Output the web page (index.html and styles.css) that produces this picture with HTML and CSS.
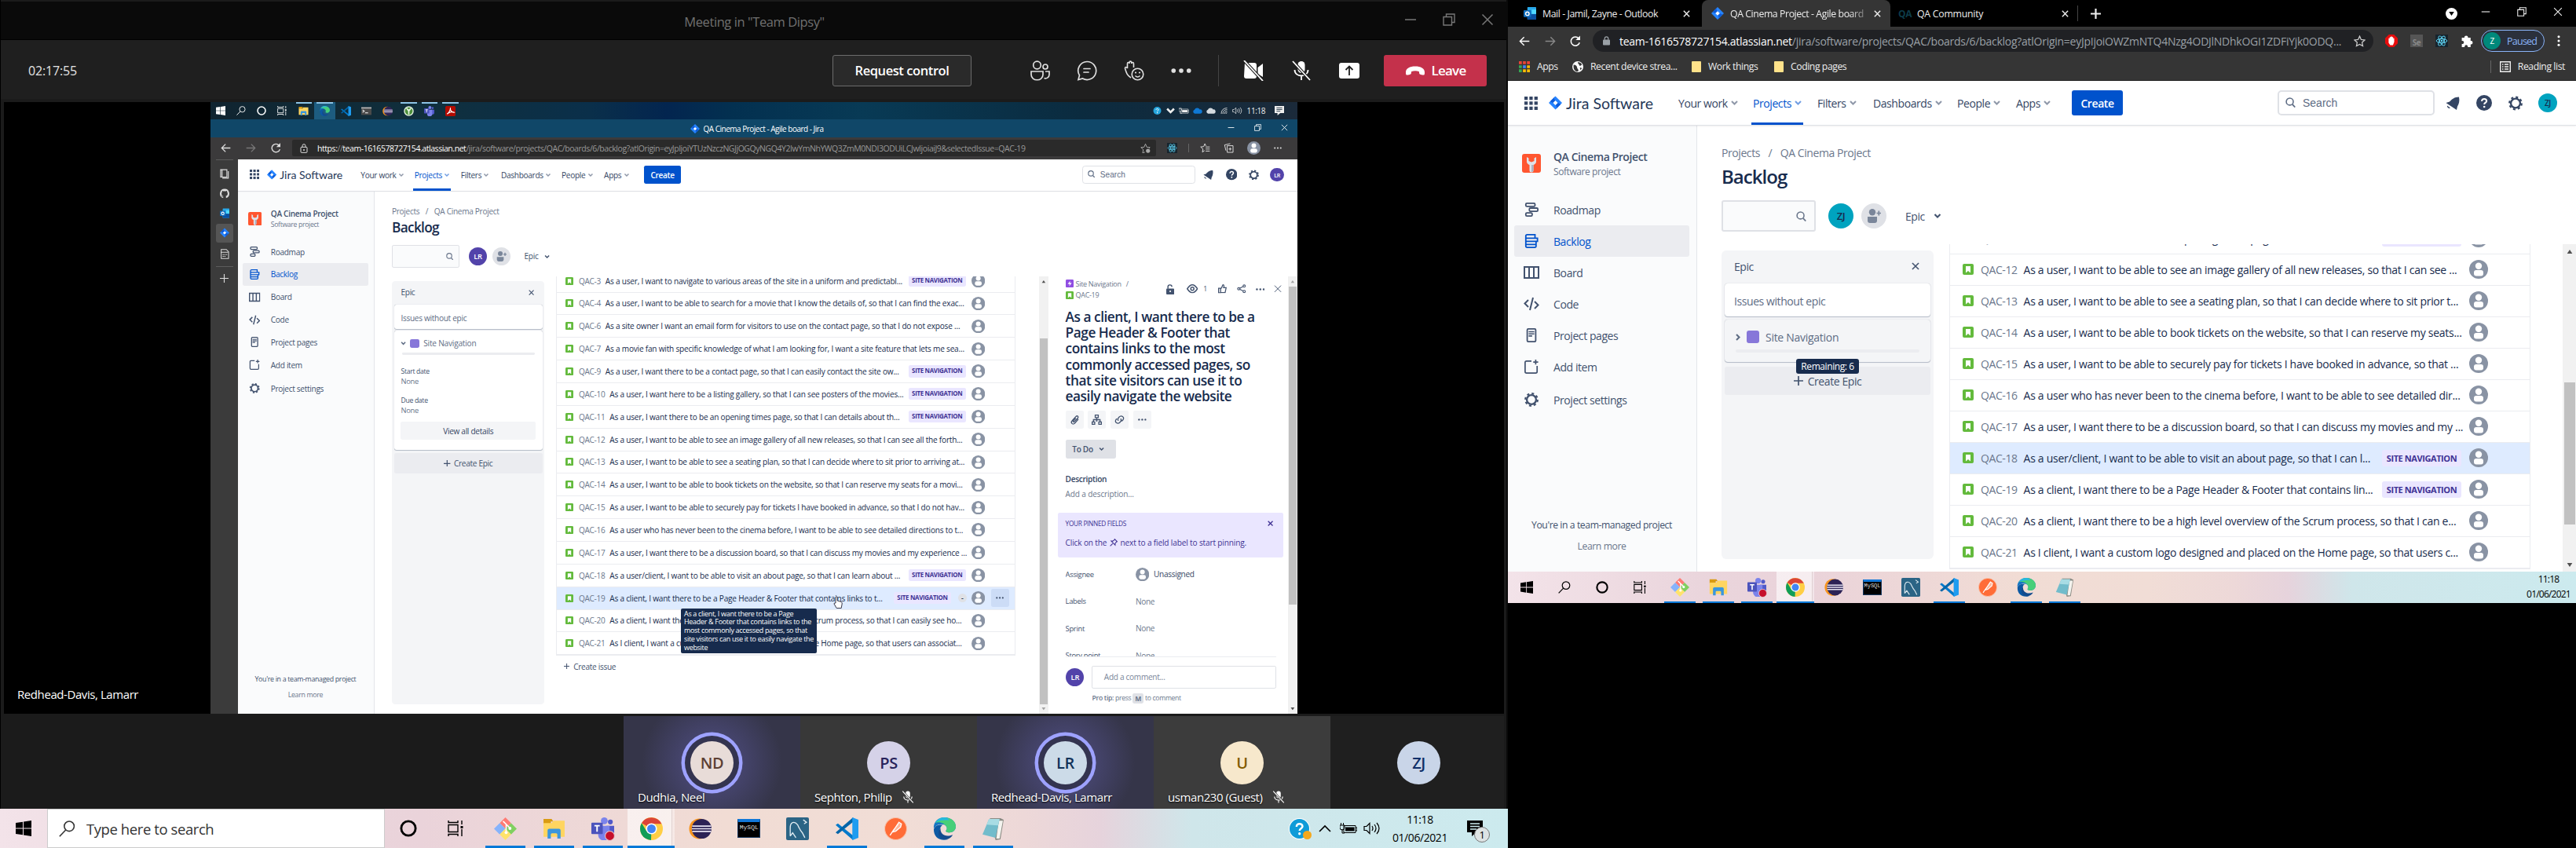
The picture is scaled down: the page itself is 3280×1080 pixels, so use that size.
FILE: index.html
```html
<!DOCTYPE html>
<html lang="en">
<head>
<meta charset="utf-8">
<title>Meeting in "Team Dipsy"</title>
<link rel="stylesheet" href="styles.css">
</head>
<body>
<svg class="defs" aria-hidden="true">
<symbol id="win" viewBox="0 0 20 20"><path fill="currentColor" d="M0 3l9-1.3v7.8H0zM10 1.5L20 0v9.5H10zM0 10.5h9v7.8L0 17zM10 10.5h10V20l-10-1.5z"/></symbol>
<symbol id="search" viewBox="0 0 20 20"><g fill="none" stroke="currentColor" stroke-width="1.5"><circle cx="12.5" cy="7" r="6"/><path d="M8.3 11.5L0.8 19.3"/></g></symbol>
<symbol id="cortana" viewBox="0 0 20 20"><circle cx="10" cy="10" r="8.3" fill="none" stroke="currentColor" stroke-width="2.6"/></symbol>
<symbol id="task" viewBox="0 0 20 20"><g fill="none" stroke="currentColor" stroke-width="1.4"><path d="M1 5.500h12v9H1zM1 0v2.500h12V0M1 20v-2.500h12V20M18 0v5M18 11v9"/></g><path d="M16.500 7h3v3h-3z" fill="currentColor"/></symbol>
<symbol id="git" viewBox="0 0 30 30"><path fill="#ff7b75" d="M15 0l7.500 7.500L15 15 7.500 7.500z"/><path fill="#86b3fb" d="M7.500 7.500L15 15l-7.500 7.500L0 15z"/><path fill="#80d060" d="M22.500 7.500L30 15l-7.500 7.500L15 15z"/><path fill="#ffe36b" d="M15 15l7.500 7.500L15 30l-7.500-7.500z"/><path d="M12 5l9 9M16 9v11" stroke="#fff" stroke-width="1.600" fill="none"/><circle cx="21" cy="14.500" r="2" fill="#fff"/><circle cx="16" cy="20" r="2" fill="#fff"/></symbol>
<symbol id="folder" viewBox="0 0 28 24"><path fill="#d99b12" d="M1 0h10l2 3h-3v3H1z"/><path fill="#ffd560" d="M1 5h10l2-3h14v20H1z"/><path fill="#3a96dd" d="M6 24V14a2 2 0 0 1 2-2h12a2 2 0 0 1 2 2v10h-4v-5a1.500 1.500 0 0 0-1.500-1.500h-5A1.500 1.500 0 0 0 10 19v5z"/></symbol>
<symbol id="teams" viewBox="0 0 30 30"><circle cx="17" cy="4.500" r="4.500" fill="#7b83eb"/><circle cx="25" cy="6" r="3.200" fill="#5059c9"/><path fill="#5059c9" d="M20 11h10v9a5 5 0 0 1-8 4z"/><path fill="#7b83eb" d="M9 11h15v11a7 7 0 0 1-15 2z"/><rect y="7" width="15" height="15" rx="1" fill="#4b53bc"/><path d="M4 11h7M7.500 11v8" stroke="#fff" stroke-width="2"/></symbol>
<symbol id="dot" viewBox="0 0 12 12"><circle cx="6" cy="6" r="5.500" fill="#c50f2b" stroke="#e9c8cc"/></symbol>
<symbol id="chrome" viewBox="0 0 28 28"><circle cx="14" cy="14" r="14" fill="#ffce44"/><path fill="#db4437" d="M14 14L1.900 7A14 14 0 0 1 26.500 8H14z"/><path fill="#0f9d58" d="M14 14l-.5 14A14 14 0 0 1 1.900 7l6 10z"/><circle cx="14" cy="14" r="6.800" fill="#fff"/><circle cx="14" cy="14" r="5.300" fill="#4285f4"/></symbol>
<symbol id="eclipse" viewBox="0 0 30 28"><circle cx="14" cy="14" r="13.500" fill="#f7941e"/><circle cx="17" cy="14" r="13" fill="#2c2255"/><path d="M4.500 10.500h25M4 14h26M4.500 17.500h25" stroke="#e6e3f2" stroke-width="1.800"/></symbol>
<symbol id="wb" viewBox="0 0 28 28"><rect width="28" height="28" rx="2" fill="#2b6485"/><path d="M5 23V13c0-7 5-9 9-4 2 4 3 7 6 10l3 6M5 23l3-4 4 6M21 3l4 3-3 2" fill="none" stroke="#e2edf3" stroke-width="1.300"/></symbol>
<symbol id="code" viewBox="0 0 30 30"><path fill="#0179cb" d="M0 10l3-2 20 16v6z"/><path fill="#0065a9" d="M0 20l3 2L23 6V0z"/><path fill="#1f9cf0" d="M22 0l8 3v24l-8 3z"/></symbol>
<symbol id="post" viewBox="0 0 28 28"><circle cx="14" cy="14" r="13.500" fill="#ff6c37" stroke="#f8c3ac"/><path d="M7 22l4-6 6-8M18 6l3 2-1 4-6 5-4 1z" fill="#ffb89c" stroke="#fff" stroke-width="1.300"/></symbol>
<symbol id="edge" viewBox="0 0 30 30"><path fill="#1475c4" d="M1 15C0 5 8 0 15 0c9 0 15 6 15 12 0 5-4 8-8 8-3 0-5-1-5-2 0-1 2-2 1-5-1-3-4-4-7-4-5 0-9 3-10 6z"/><path fill="#47cf79" d="M3 7C7 1 13 0 17 .300 25 1 30 6 30 12c0 5-4 8-8 8-3 0-5-1-5-2 0-1 2-2 1-5C16 8 9 5 3 7z"/><path fill="#27b9dc" d="M3 7C6 2 10 0 15 0c4 0 6 2 6 4-6-1-13 0-18 3z"/><path fill="#0c59a4" d="M10 13c-4 8 1 17 10 16C9 32 1 26 1 16c1-5 6-7 12-6-1 0-2 1-3 3z"/><path fill="#134b8e" d="M10 14c-1 7 5 13 16 9-3 6-11 8-16 4-4-4-3-9 0-13z"/></symbol>
<symbol id="note" viewBox="0 0 26 28"><path fill="#8b8b84" d="M9 1h13l4 2-4 24-6 1z"/><path fill="#f4f4ef" d="M20 4l5 0-4 22-4 0z"/><path fill="#72bccb" d="M8 2h13l-5 23L0 21z"/><path fill="#a8dce4" d="M8 2h13l-2 8L5 9z"/></symbol>
<symbol id="term" viewBox="0 0 24 18"><path fill="#4a4a4a" d="M0 0h24v18H0z"/><path fill="#bbb" d="M0 0h24v3H0z"/><path d="M3 6l4 3-4 3M9 13h7" stroke="#fff" fill="none" stroke-width="2"/></symbol>
<symbol id="spring" viewBox="0 0 24 24"><circle cx="12" cy="12" r="11.500" fill="#e6f4e1"/><circle cx="12" cy="12" r="9" fill="#4d8f3c"/><path d="M12 20V8M7 5l5 7 5-7" stroke="#e9f7e4" stroke-width="3" fill="none"/></symbol>
<symbol id="acro" viewBox="0 0 24 24"><rect width="24" height="24" rx="3" fill="#b30b00"/><path d="M12 4c-2 6 5 12 9 11-4-3-12 0-17 4 4-3 8-9 8-15z" fill="none" stroke="#fff" stroke-width="2"/></symbol>
<symbol id="help" viewBox="0 0 24 24"><circle cx="12" cy="12" r="12" fill="currentColor"/><path d="M8.500 9.500c0-5 7.300-4.500 7.300-.3 0 2.300-3.600 2.500-3.600 5.300" fill="none" stroke="#fff" stroke-width="2.400"/><circle cx="12.200" cy="18" r="1.600" fill="#fff"/></symbol>
<symbol id="up" viewBox="0 0 16 10"><path d="M1 9l7-7 7 7" fill="none" stroke="currentColor" stroke-width="1.600"/></symbol>
<symbol id="down" viewBox="0 0 10 8"><path d="M1.500 2l3.500 3.500L8.500 2" fill="none" stroke="currentColor" stroke-width="2.100"/></symbol>
<symbol id="batt" viewBox="0 0 22 14"><path d="M5 3.500h15v9H5zM20 6h2v4h-2" fill="none" stroke="currentColor"/><path d="M7 5.500h11.500v5H7z" fill="currentColor"/><path d="M0 3h6v3a3 3 0 0 1-6 0zM1.500 0v3M4.500 0v3M3 8v5h3" fill="none" stroke="currentColor"/></symbol>
<symbol id="vol" viewBox="0 0 22 16"><path d="M1 5.500h3l4-4v13l-4-4H1zM11 5q2 3 0 6M14 3q4 5 0 10M17 1q6 7 0 14" fill="none" stroke="currentColor" stroke-width="1.200"/></symbol>
<symbol id="wifi" viewBox="0 0 20 20"><path d="M3 18Q3 4 18 3M7 18Q7 8 18 7M11 18q0-6 7-7M15 18q0-3 3-3" fill="none" stroke="currentColor" stroke-width="1.600"/></symbol>
<symbol id="cloud" viewBox="0 0 24 16"><path fill="currentColor" d="M6 15a5 5 0 0 1-.5-9.500A7 7 0 0 1 18 5a5 5 0 0 1 1 10z"/></symbol>
<symbol id="notif" viewBox="0 0 20 20"><path fill="currentColor" d="M0 0h20v15h-8l-6 5v-5H0z"/><path d="M4 4h12M4 7.500h12M4 11h8" stroke="var(--cut,#cdebee)" stroke-width="1.400"/></symbol>
<symbol id="people" viewBox="0 0 26 26"><g fill="none" stroke="currentColor" stroke-width="1.700"><circle cx="9.500" cy="6" r="4.800"/><circle cx="20" cy="8" r="3"/><path d="M2 14h15v4c0 9-15 9-15 0zM20 14h5v4c0 4-4 5.500-6.500 4.500"/></g></symbol>
<symbol id="chat" viewBox="0 0 26 26"><path d="M13 1.500A11.500 11.500 0 1 1 7.500 23L2 24.500 3.500 19A11.500 11.500 0 0 1 13 1.500zM9 10.500h8M9 15h6" fill="none" stroke="currentColor" stroke-width="1.700" stroke-linecap="round"/></symbol>
<symbol id="react" viewBox="0 0 26 26"><g fill="none" stroke="currentColor" stroke-width="1.600"><path d="M9 22C4 19 3 15 1.500 10c0-2 2-2 3 0V4c0-2 2.500-2 2.500 0V3c0-2.500 2.800-2.500 2.800 0v1c0-2 2.700-2 2.700 0v5"/><circle cx="17.500" cy="17.500" r="7.300"/><path d="M14.500 19.500q3 3 6 0"/></g><circle cx="15" cy="15.500" r="1.100" fill="currentColor"/><circle cx="20" cy="15.500" r="1.100" fill="currentColor"/></symbol>
<symbol id="dots" viewBox="0 0 24 6"><g fill="currentColor"><circle cx="3" cy="3" r="2.600"/><circle cx="12" cy="3" r="2.600"/><circle cx="21" cy="3" r="2.600"/></g></symbol>
<symbol id="camoff" viewBox="0 0 26 26"><path fill="currentColor" d="M2 3h12a3 3 0 0 1 3 3v14a3 3 0 0 1-3 3H4a3 3 0 0 1-3-3zM18.500 9L25 4v17l-6.500-4z"/><path d="M1 0l24 26" stroke="#1f1f1f" stroke-width="4"/><path d="M1 0l24 26" stroke="currentColor" stroke-width="1.800"/></symbol>
<symbol id="micoff" viewBox="0 0 26 26"><rect x="8.500" y="1" width="9" height="15" rx="4.500" fill="currentColor"/><path d="M4.500 12c0 10 17 10 17 0M13 20v5" fill="none" stroke="currentColor" stroke-width="1.800"/><path d="M2 1l22 24" stroke="var(--cut,#1f1f1f)" stroke-width="4"/><path d="M2 1l22 24" stroke="currentColor" stroke-width="1.800"/></symbol>
<symbol id="present" viewBox="0 0 26 20"><rect width="26" height="20" rx="3" fill="currentColor"/><path d="M13 16V5M8.500 9L13 4.500 17.500 9" stroke="#1f1f1f" stroke-width="1.800" fill="none"/></symbol>
<symbol id="phone" viewBox="0 0 26 12"><path fill="currentColor" d="M1 8C1 3 6 .500 13 .500S25 3 25 8c0 4-.5 4-4 3.200-2.500-.6-3-1-3-4C15 6 11 6 8 7.200c0 3-.5 3.400-3 4C1.500 12 1 12 1 8z"/></symbol>
<symbol id="x" viewBox="0 0 16 16"><path d="M1.500 1.500l13 13M14.500 1.500l-13 13" stroke="currentColor" stroke-width="var(--w,1.500)"/></symbol>
<symbol id="min" viewBox="0 0 16 16"><path d="M1 8h14" stroke="currentColor" stroke-width="1.500"/></symbol>
<symbol id="restore" viewBox="0 0 16 16"><path d="M1 4.500h10.500V15H1zM4.500 4V1H15v10.500h-3" fill="none" stroke="currentColor" stroke-width="1.400"/></symbol>
<symbol id="jira" viewBox="0 0 20 20"><path fill="#2684ff" d="M10 0l10 10-10 10L0 10z"/><path fill="#0e5bd8" d="M10 0q-4 3.500 0 6.500L6.500 10 2 8zM10 20q4-3.500 0-6.500l3.500-3.500L18 12z"/><path fill="#fff" d="M10 6.500l3.500 3.500-3.500 3.500L6.500 10z"/></symbol>
<symbol id="back" viewBox="0 0 20 20"><path d="M19 10H2M9.500 2.500L2 10l7.500 7.500" fill="none" stroke="currentColor" stroke-width="2"/></symbol>
<symbol id="fwd" viewBox="0 0 20 20"><path d="M1 10h17M10.500 2.500L18 10l-7.500 7.500" fill="none" stroke="currentColor" stroke-width="2"/></symbol>
<symbol id="reload" viewBox="0 0 20 20"><path d="M17.500 12.500A8 8 0 1 1 16 5" fill="none" stroke="currentColor" stroke-width="2.200"/><path d="M18.500 0v8h-8z" fill="currentColor"/></symbol>
<symbol id="lock" viewBox="0 0 14 18"><rect y="6.500" width="14" height="11" rx="1.500" fill="currentColor"/><path d="M3.500 7V4.500a3.500 3.500 0 0 1 7 0V7" fill="none" stroke="currentColor" stroke-width="2"/></symbol>
<symbol id="lockline" viewBox="0 0 14 18"><rect x="1" y="6.500" width="12" height="10.500" rx="1.500" fill="none" stroke="currentColor" stroke-width="1.500"/><path d="M4 6.500V4a3 3 0 0 1 6 0v2.500" fill="none" stroke="currentColor" stroke-width="1.500"/><circle cx="7" cy="12" r="1.500" fill="currentColor"/></symbol>
<symbol id="star" viewBox="0 0 20 20"><path d="M10 1.500l2.600 5.700 6.200.7-4.600 4.200 1.200 6.100L10 15.200l-5.400 3 1.200-6.100L1.200 7.900l6.200-.7z" fill="none" stroke="currentColor" stroke-width="1.700"/></symbol>
<symbol id="staradd" viewBox="0 0 20 20"><path d="M9 18l-4.400 2 1.200-7L1.200 8.900l6.200-.7L10 2l2.600 6.200 6.200.7-2 2" fill="none" stroke="currentColor" stroke-width="1.500"/><circle cx="15" cy="15.500" r="4" fill="currentColor"/></symbol>
<symbol id="fav" viewBox="0 0 20 20"><path d="M9 15l-4.400 3 1.200-6L1.200 7.900l6-.7L9.500 1.500l2 4.500M11 8h8M11 12h8M11 16h8" fill="none" stroke="currentColor" stroke-width="1.500"/></symbol>
<symbol id="coll" viewBox="0 0 20 20"><path d="M7 5.500h11.500v13H7zM4.500 15L2 4l11-2.500M12.700 9v6M9.700 12h6" fill="none" stroke="currentColor" stroke-width="1.500"/></symbol>
<symbol id="hand" viewBox="0 0 20 20"><path d="M6 0h8l6 6v8l-6 6H6l-6-6V6z" fill="#e60d0d"/><path d="M5.500 9V6h1.700V4H9V3h2v1h1.700v2h1.700v6l-2 5H8l-2.500-4z" fill="#fff"/></symbol>
<symbol id="atom" viewBox="0 0 20 20"><rect width="20" height="20" fill="#17242d"/><g fill="none" stroke="#61dafb" stroke-width="1.200"><ellipse cx="10" cy="10" rx="8.500" ry="3.300"/><ellipse cx="10" cy="10" rx="8.500" ry="3.300" transform="rotate(60 10 10)"/><ellipse cx="10" cy="10" rx="8.500" ry="3.300" transform="rotate(120 10 10)"/></g><circle cx="10" cy="10" r="1.600" fill="#61dafb"/></symbol>
<symbol id="puzzle" viewBox="0 0 20 20"><path fill="currentColor" d="M2 5h4a3 3 0 1 1 6 0h4v5a2.800 2.800 0 1 1 0 5.500V20h-4.500a2.600 2.600 0 1 0-5 0H2v-5a2.600 2.600 0 1 0 0-5z"/></symbol>
<symbol id="apps9" viewBox="0 0 15 15"><path fill="#ea4335" d="M0 0h4v4H0zM5.500 0h4v4h-4zM11 0h4v4h-4z"/><path fill="#34a853" d="M0 5.500h4v4H0zM0 11h4v4H0z"/><path fill="#4285f4" d="M5.500 5.500h4v4h-4z"/><path fill="#fbbc05" d="M11 5.500h4v4h-4zM5.500 11h4v4h-4zM11 11h4v4h-4z"/></symbol>
<symbol id="globe" viewBox="0 0 16 16"><circle cx="8" cy="8" r="8" fill="#fff"/><path fill="#353535" d="M2 5c3 0 5 2 5 4s2 2 2 5l-2 1C3 14 1 10 2 5zM8 1.500c0 3 2 2 2 4s3 1 4-1C13 2.500 10 1 8 1.500zM11 9l3 1-2 3z"/></symbol>
<symbol id="outlook" viewBox="0 0 20 20"><rect x="6" y="0" width="14" height="20" rx="1" fill="#28a8ea"/><path fill="#0a4fa0" d="M6 11h14v9H6z"/><path fill="#50d9ff" d="M13 4h7v7h-7z"/><rect y="5" width="12" height="11" rx="1" fill="#0f6cbd"/><circle cx="6" cy="10.500" r="2.800" fill="none" stroke="#fff" stroke-width="1.800"/></symbol>
<symbol id="github" viewBox="0 0 20 20"><path fill="currentColor" d="M10 0a10 10 0 0 0-3 19.500v-3c-3 1-4-1-4-1l1-1 2 1.500 1.500-.8C4 15 3.500 12 3.500 10c0-1.500.5-2.500 1.200-3.300V4C6 4 7 5 7.500 5h5c.5 0 1.500-1 2.800-1v2.700c.7.800 1.200 1.800 1.200 3.300 0 2-.5 5-4 5.200.5.800.5 1.300.5 4.300A10 10 0 0 0 10 0z"/></symbol>
<symbol id="grid" viewBox="0 0 18 18"><path fill="currentColor" d="M0 0h4.500v4.500H0zM6.700 0h4.500v4.500H6.700zM13.400 0h4.500v4.500h-4.500zM0 6.700h4.500v4.500H0zM6.700 6.700h4.500v4.500H6.700zM13.400 6.700h4.500v4.500h-4.500zM0 13.400h4.500v4.500H0zM6.700 13.400h4.500v4.500H6.700zM13.400 13.400h4.500v4.500h-4.500z"/></symbol>
<symbol id="mag" viewBox="0 0 14 14"><circle cx="6" cy="5.800" r="4.800" fill="none" stroke="currentColor" stroke-width="1.700"/><path d="M9.500 9.500l3.700 4" stroke="currentColor" stroke-width="1.900"/></symbol>
<symbol id="bell" viewBox="0 0 18 18"><path fill="currentColor" d="M17 1c1 5 0 9-2 12l-1 4.500L.500 8.500 5 7c3-3 6-6 12-6zM2 12l4 3a2.700 2.700 0 0 1-4-3z"/></symbol>
<symbol id="gear" viewBox="0 0 20 20"><circle cx="10" cy="10" r="6.600" fill="none" stroke="currentColor" stroke-width="2.600"/><circle cx="10" cy="10" r="8.700" fill="none" stroke="currentColor" stroke-width="2.400" stroke-dasharray="3.400 3.430"/></symbol>
<symbol id="wrench" viewBox="0 0 24 24"><rect width="24" height="24" rx="3" fill="#ff5630"/><path fill="#dfe3ea" d="M6 4v6c0 2 2 3.500 3.500 4v7a2.500 2.500 0 0 0 5 0v-7c1.500-.5 3.500-2 3.500-4V4l-2.500 1.500V9L12 10.500 8.500 9V5.500z"/><path fill="#aab4c4" d="M12 14h2.500v7a2.500 2.500 0 0 1-2.500 2z"/></symbol>
<symbol id="road" viewBox="0 0 20 20"><g fill="none" stroke="currentColor" stroke-width="2"><rect x="2" y="1" width="13" height="4.500" rx="1.500"/><rect x="7" y="7.800" width="12" height="4.500" rx="1.500"/><rect x="2" y="14.500" width="9" height="4.500" rx="1.500"/></g></symbol>
<symbol id="blog" viewBox="0 0 20 20"><g fill="none" stroke="currentColor" stroke-width="2"><path d="M2 3q0-2 2-2h11v5H2zM2 6h16.500v4.500H2zM2 10.500h14.500v4.300H2zM2 14.800h14.500V17q0 2-2 2H4q-2 0-2-2z"/></g></symbol>
<symbol id="board" viewBox="0 0 20 16"><path d="M1 1h18v14H1zM7 1v14M13 1v14" fill="none" stroke="currentColor" stroke-width="2"/></symbol>
<symbol id="cd" viewBox="0 0 20 16"><path d="M6 3L1.500 7.500 6 12M14 5l4.500 4.500L14 14M12 0L8 16" fill="none" stroke="currentColor" stroke-width="2"/></symbol>
<symbol id="page" viewBox="0 0 14 20"><rect x="1" y="1" width="12" height="18" rx="1.500" fill="none" stroke="currentColor" stroke-width="2"/><path d="M3 5h8M3 8h8M3 11h5" stroke="currentColor" stroke-width="1.800"/></symbol>
<symbol id="book" viewBox="0 0 16 18"><path d="M1 1.500h11v13H1zM3.500 1.500v13M4 16.500h10.500V4" fill="none" stroke="currentColor" stroke-width="1.600"/></symbol>
<symbol id="calc" viewBox="0 0 16 18"><path d="M2 1h9l4 4v12H2zM1 6h13M4.500 10h2M7.500 10h2M10.500 10h2M4.500 13h2M7.500 13h2" fill="none" stroke="currentColor" stroke-width="1.400"/></symbol>
<symbol id="add" viewBox="0 0 20 20"><path d="M10 2H3q-2 0-2 2v13q0 2 2 2h13q2 0 2-2V9M16 0v7M12.500 3.500h7" fill="none" stroke="currentColor" stroke-width="1.900"/></symbol>
<symbol id="addp" viewBox="0 0 18 18"><circle cx="7" cy="4.300" r="4.200" fill="currentColor"/><path fill="currentColor" d="M1 10h12v5q0 3-3 3H4q-3 0-3-3z"/><path d="M15.300 2.500v6M12.500 5.500h5.500" stroke="currentColor" stroke-width="1.700"/></symbol>
<symbol id="story" viewBox="0 0 14 14"><rect width="14" height="14" rx="2" fill="#63ba3c"/><path d="M4 3h6v8.500L7 9l-3 2.500z" fill="#fff"/></symbol>
<symbol id="bolt" viewBox="0 0 14 14"><rect width="14" height="14" rx="2" fill="#904ee2"/><path d="M8 2L3.500 8H7l-1 4 4.500-6H7z" fill="#fff"/></symbol>
<symbol id="user" viewBox="0 0 24 24"><circle cx="12" cy="12" r="12" fill="#8993a4"/><circle cx="12" cy="7.700" r="4.200" fill="#fff"/><rect x="6" y="13" width="12" height="7.500" rx="3" fill="#fff"/></symbol>
<symbol id="unlock" viewBox="0 0 14 18"><rect y="7.500" width="14" height="10.500" rx="1.500" fill="currentColor"/><path d="M3 8V5a3.500 3.500 0 0 1 7-.5" fill="none" stroke="currentColor" stroke-width="2"/><circle cx="7" cy="12.500" r="1.500" fill="#fff"/></symbol>
<symbol id="eye" viewBox="0 0 20 16"><path d="M1 8q9-14 18 0-9 14-18 0z" fill="none" stroke="currentColor" stroke-width="2"/><circle cx="10" cy="8" r="2.800" fill="none" stroke="currentColor" stroke-width="2"/></symbol>
<symbol id="thumb" viewBox="0 0 18 18"><path d="M1 8h4v9H1zM5 9c4-2 3-8 5-8s2 4 1 6h5l-2 9.500H5" fill="none" stroke="currentColor" stroke-width="2"/></symbol>
<symbol id="share" viewBox="0 0 20 20"><path d="M16 4L4 10l12 6" fill="none" stroke="currentColor" stroke-width="2"/><g fill="#fff" stroke="currentColor" stroke-width="2"><circle cx="16" cy="4" r="2.500"/><circle cx="4" cy="10" r="2.500"/><circle cx="16" cy="16" r="2.500"/></g></symbol>
<symbol id="clip" viewBox="0 0 20 20"><path d="M17 9l-7 8c-4 4-9-1-5-5l7-8c3-3 6 0 4 3l-7 7c-1 1-3 0-2-2l5-5" fill="none" stroke="currentColor" stroke-width="2"/></symbol>
<symbol id="tree" viewBox="0 0 20 20"><path d="M7 1h6v5H7zM10 6v8M3.500 14v-4h13v4M1 14.500h5v4.500H1zM14 14.500h5v4.500h-5z" fill="none" stroke="currentColor" stroke-width="2"/></symbol>
<symbol id="link" viewBox="0 0 20 20"><path d="M8 12c-3-3-1-5 1-7 5-5 11 0 8 5l-3 3M12 8c3 3 1 5-1 7-5 5-11 0-8-5l2-2" fill="none" stroke="currentColor" stroke-width="2"/></symbol>
<symbol id="pin" viewBox="0 0 16 16"><path d="M10 1l5 5-2 1-2 3v3L3 5h3l3-2zM6 10l-5 5" fill="none" stroke="currentColor" stroke-width="1.700"/></symbol>
<symbol id="tri" viewBox="0 0 8 6"><path d="M0 6l4-6 4 6z" fill="currentColor"/></symbol>
<symbol id="trid" viewBox="0 0 8 6"><path d="M0 0l4 6 4-6z" fill="currentColor"/></symbol>
<symbol id="plus" viewBox="0 0 12 12"><path d="M6 0v12M0 6h12" stroke="currentColor" stroke-width="var(--w,1.700)"/></symbol>
</svg>

<main class="desk">
<section class="screen1">
  <div class="teams">
    <header class="ttitle"><span class="tt">Meeting in "Team Dipsy"</span><span class="wc"><svg><use href="#min"/></svg><svg><use href="#restore"/></svg><svg><use href="#x"/></svg></span></header>
    <div class="tbar">
      <span class="timer">02:17:55</span><span class="req">Request control</span>
      <div class="tic"><svg><use href="#people"/></svg><svg><use href="#chat"/></svg><svg><use href="#react"/></svg><svg><use href="#dots"/></svg></div>
      <div class="tic b"><svg><use href="#camoff"/></svg><svg><use href="#micoff"/></svg><svg><use href="#present"/></svg></div>
      <span class="leave"><svg><use href="#phone"/></svg>Leave</span>
    </div>
    <div class="stage">
      <div class="speaker">Redhead-Davis, Lamarr</div>
      <div class="share">
        <div class="mtask">
          <div class="ma"><svg><use href="#win"/></svg><svg><use href="#search"/></svg><svg><use href="#cortana"/></svg><svg><use href="#task"/></svg></div>
          <div class="mb"><i class="on"><svg><use href="#folder"/></svg></i><i class="on act"><svg><use href="#edge"/></svg></i><i><svg><use href="#code"/></svg></i><i><svg><use href="#term"/></svg></i><i><svg><use href="#eclipse"/></svg></i><i class="on"><svg><use href="#spring"/></svg></i><i class="on"><svg><use href="#teams"/></svg></i><i class="on"><svg><use href="#acro"/></svg></i></div>
          <div class="mt"><svg class="hb"><use href="#help"/></svg><svg><use href="#down"/></svg><svg><use href="#batt"/></svg><svg class="c1"><use href="#cloud"/></svg><svg class="c2"><use href="#cloud"/></svg><svg><use href="#wifi"/></svg><svg><use href="#vol"/></svg><span>11:18</span><svg class="nt"><use href="#notif"/></svg></div>
        </div>
        <div class="mtitle"><svg><use href="#jira"/></svg><span>QA Cinema Project - Agile board - Jira</span><div class="mwc"><svg><use href="#min"/></svg><svg><use href="#restore"/></svg><svg><use href="#x"/></svg></div></div>
        <div class="maddr"><div class="mnav"><svg><use href="#back"/></svg><svg class="dim"><use href="#fwd"/></svg><svg><use href="#reload"/></svg></div>
          <div class="murl"><svg><use href="#lockline"/></svg><span class="u"><b>https:</b>//<b>team-1616578727154.atlassian.net</b>/jira/software/projects/QAC/boards/6/backlog?atlOrigin=eyJpIjoiYTUzNzczNGJjOGQyNGQ4Y2IwYmNhYWQ3ZmM0NDI3ODUiLCJwIjoiaiJ9&amp;selectedIssue=QAC-19</span><svg class="sa"><use href="#staradd"/></svg></div>
          <div class="mx"><svg><use href="#atom"/></svg><i></i><svg><use href="#fav"/></svg><svg><use href="#coll"/></svg><svg class="pf"><use href="#user"/></svg><svg class="dd"><use href="#dots"/></svg></div></div>
        <div class="mbody">
          <div class="mside"><hr><svg><use href="#book"/></svg><svg><use href="#github"/></svg><svg><use href="#outlook"/></svg><span class="sel"><svg><use href="#jira"/></svg></span><svg><use href="#calc"/></svg><hr><svg class="pl"><use href="#plus"/></svg></div>
          <div class="jira small">
            <header class="jh"><svg class="grid"><use href="#grid"/></svg><svg class="logo"><use href="#jira"/></svg><span class="brand">Jira Software</span>
              <nav><a class="n1">Your work<svg><use href="#down"/></svg></a><a class="n2">Projects<svg><use href="#down"/></svg></a><a class="n3">Filters<svg><use href="#down"/></svg></a><a class="n4">Dashboards<svg><use href="#down"/></svg></a><a class="n5">People<svg><use href="#down"/></svg></a><a class="n6">Apps<svg><use href="#down"/></svg></a></nav>
              <span class="create">Create</span><div class="jsearch"><svg><use href="#mag"/></svg>Search</div>
              <div class="jico"><svg><use href="#bell"/></svg><svg class="q"><use href="#help"/></svg><svg><use href="#gear"/></svg></div><span class="av lr sm">LR</span></header>
            <div class="jbody">
              <aside class="jside"><div class="proj"><svg><use href="#wrench"/></svg><div><b>QA Cinema Project</b><small>Software project</small></div></div>
                <ul><li><svg><use href="#road"/></svg>Roadmap</li><li class="cur"><svg><use href="#blog"/></svg>Backlog</li><li><svg><use href="#board"/></svg>Board</li><li><svg><use href="#cd"/></svg>Code</li><li><svg><use href="#page"/></svg>Project pages</li><li><svg><use href="#add"/></svg>Add item</li><li class="last"><svg><use href="#gear"/></svg>Project settings</li></ul>
                <div class="foot"><span>You're in a team-managed project</span><a>Learn more</a></div></aside>
              <div class="jmain">
                <div class="crumbs"><span>Projects</span><span>/</span><span>QA Cinema Project</span></div><h1>Backlog</h1>
                <div class="filters"><div class="fbox"><svg><use href="#mag"/></svg></div><span class="av lr">LR</span><span class="av ap"><svg><use href="#addp"/></svg></span><span class="ef">Epic<svg><use href="#down"/></svg></span></div>
                <div class="work">
                  <div class="epic"><div class="eh">Epic<svg><use href="#x"/></svg></div><div class="card c0">Issues without epic</div>
                    <div class="card sn open"><div class="snt"><svg><use href="#down"/></svg><i></i>Site Navigation</div><div class="bar"></div><dl><dt>Start date</dt><dd>None</dd><dt>Due date</dt><dd>None</dd></dl><div class="vad">View all details</div></div>
                    <div class="ce"><svg><use href="#plus"/></svg>Create Epic</div></div>
                  <div class="listwrap"><div class="list">
                    <div class="row"><svg><use href="#story"/></svg><em>QAC-3</em><p>As a user, I want to navigate to various areas of the site in a uniform and predictabl...</p><b>SITE NAVIGATION</b><svg class="us"><use href="#user"/></svg></div>
                    <div class="row"><svg><use href="#story"/></svg><em>QAC-4</em><p>As a user, I want to be able to search for a movie that I know the details of, so that I can find the exac...</p><svg class="us"><use href="#user"/></svg></div>
                    <div class="row"><svg><use href="#story"/></svg><em>QAC-6</em><p>As a site owner I want an email form for visitors to use on the contact page, so that I do not expose ...</p><svg class="us"><use href="#user"/></svg></div>
                    <div class="row"><svg><use href="#story"/></svg><em>QAC-7</em><p>As a movie fan with specific knowledge of what I am looking for, I want a site feature that lets me sea...</p><svg class="us"><use href="#user"/></svg></div>
                    <div class="row"><svg><use href="#story"/></svg><em>QAC-9</em><p>As a user, I want there to be a contact page, so that I can easily contact the site ow...</p><b>SITE NAVIGATION</b><svg class="us"><use href="#user"/></svg></div>
                    <div class="row"><svg><use href="#story"/></svg><em>QAC-10</em><p>As a user, I want here to be a listing gallery, so that I can see posters of the movies...</p><b>SITE NAVIGATION</b><svg class="us"><use href="#user"/></svg></div>
                    <div class="row"><svg><use href="#story"/></svg><em>QAC-11</em><p>As a user, I want there to be an opening times page, so that I can details about th...</p><b>SITE NAVIGATION</b><svg class="us"><use href="#user"/></svg></div>
                    <div class="row"><svg><use href="#story"/></svg><em>QAC-12</em><p>As a user, I want to be able to see an image gallery of all new releases, so that I can see all the forth...</p><svg class="us"><use href="#user"/></svg></div>
                    <div class="row"><svg><use href="#story"/></svg><em>QAC-13</em><p>As a user, I want to be able to see a seating plan, so that I can decide where to sit prior to arriving at...</p><svg class="us"><use href="#user"/></svg></div>
                    <div class="row"><svg><use href="#story"/></svg><em>QAC-14</em><p>As a user, I want to be able to book tickets on the website, so that I can reserve my seats for a movi...</p><svg class="us"><use href="#user"/></svg></div>
                    <div class="row"><svg><use href="#story"/></svg><em>QAC-15</em><p>As a user, I want to be able to securely pay for tickets I have booked in advance, so that I do not hav...</p><svg class="us"><use href="#user"/></svg></div>
                    <div class="row"><svg><use href="#story"/></svg><em>QAC-16</em><p>As a user who has never been to the cinema before, I want to be able to see detailed directions to t...</p><svg class="us"><use href="#user"/></svg></div>
                    <div class="row"><svg><use href="#story"/></svg><em>QAC-17</em><p>As a user, I want there to be a discussion board, so that I can discuss my movies and my experience ...</p><svg class="us"><use href="#user"/></svg></div>
                    <div class="row"><svg><use href="#story"/></svg><em>QAC-18</em><p>As a user/client, I want to be able to visit an about page, so that I can learn about ...</p><b>SITE NAVIGATION</b><svg class="us"><use href="#user"/></svg></div>
                    <div class="row hot"><svg><use href="#story"/></svg><em>QAC-19</em><p>As a client, I want there to be a Page Header &amp; Footer that contains links to t...</p><b>SITE NAVIGATION</b><i class="est">-</i><svg class="us"><use href="#user"/></svg><i class="more"><svg><use href="#dots"/></svg></i></div>
                    <div class="row"><svg><use href="#story"/></svg><em>QAC-20</em><p>As a client, I want there to be a high level overview of the Scrum process, so that I can easily see ho...</p><svg class="us"><use href="#user"/></svg></div>
                    <div class="row"><svg><use href="#story"/></svg><em>QAC-21</em><p>As I client, I want a custom logo designed and placed on the Home page, so that users can associat...</p><svg class="us"><use href="#user"/></svg></div>
                  </div><div class="ci"><svg><use href="#plus"/></svg>Create issue</div></div>
                  <div class="sb"><svg><use href="#tri"/></svg><i></i><svg class="g"><use href="#trid"/></svg></div>
                  <div class="detail">
                    <div class="dh"><div class="dc"><span><svg><use href="#bolt"/></svg>Site Navigation&nbsp;&nbsp; /</span><span><svg><use href="#story"/></svg>QAC-19</span></div><div class="da"><svg class="a1"><use href="#unlock"/></svg><svg class="a2"><use href="#eye"/></svg><span>1</span><svg class="a3"><use href="#thumb"/></svg><svg class="a4"><use href="#share"/></svg><svg class="a5"><use href="#dots"/></svg><svg class="a6"><use href="#x"/></svg></div></div>
                    <h2>As a client, I want there to be a<br>Page Header &amp; Footer that<br>contains links to the most<br>commonly accessed pages, so<br>that site visitors can use it to<br>easily navigate the website</h2>
                    <div class="dbt"><i><svg><use href="#clip"/></svg></i><i><svg><use href="#tree"/></svg></i><i><svg><use href="#link"/></svg></i><i><svg class="dd"><use href="#dots"/></svg></i></div>
                    <div class="todo">To Do<svg><use href="#down"/></svg></div>
                    <h3>Description</h3><p class="ad">Add a description...</p>
                    <div class="pinned"><div>YOUR PINNED FIELDS<svg><use href="#x"/></svg></div><p>Click on the <svg><use href="#pin"/></svg> next to a field label to start pinning.</p></div>
                    <div class="fields"><div><b>Assignee</b><span class="un"><svg><use href="#user"/></svg>Unassigned</span></div><div><b>Labels</b><span>None</span></div><div><b>Sprint</b><span>None</span></div><div><b>Story point</b><span>None</span></div></div>
                    <div class="comment"><span class="av lr">LR</span><div class="cbox">Add a comment...</div></div>
                    <div class="tip"><b>Pro tip:</b> press <kbd>M</kbd> to comment</div>
                  </div>
                  <div class="sb two"><svg class="g"><use href="#tri"/></svg><i></i><svg><use href="#trid"/></svg></div>
                </div>
              </div>
            </div>
          </div>
        </div>
        <div class="tooltip">As a client, I want there to be a Page<br>Header &amp; Footer that contains links to the<br>most commonly accessed pages, so that<br>site visitors can use it to easily navigate the<br>website</div>
        <svg class="cursor" viewBox="0 0 12 16"><path d="M3 9V1.500q1.200-1.500 2.200 0V6l5 1.500q1.300.5 1 2.500l-1 5.500h-6L1 10q0-1.500 2-1z" fill="#fff" stroke="#223" stroke-width=".9"/></svg>
      </div>
    </div>
    <div class="tiles">
      <div class="tile talk"><span class="pa nd">ND</span><label>Dudhia, Neel</label></div>
      <div class="tile"><span class="pa ps">PS</span><label>Sephton, Philip<svg><use href="#micoff"/></svg></label></div>
      <div class="tile talk"><span class="pa rl">LR</span><label>Redhead-Davis, Lamarr</label></div>
      <div class="tile lite"><span class="pa uu">U</span><label>usman230 (Guest)<svg><use href="#micoff"/></svg></label></div>
      <div class="tile me"><span class="pa zj">ZJ</span></div>
    </div>
  </div>
  <footer class="task big">
    <div class="ta"><svg><use href="#win"/></svg></div><div class="tsearch"><svg><use href="#search"/></svg>Type here to search</div><div class="ta"><svg class="co"><use href="#cortana"/></svg></div><div class="ta"><svg><use href="#task"/></svg></div>
    <div class="tb"><i class="on"><svg><use href="#git"/></svg></i><i class="on"><svg><use href="#folder"/></svg></i><i class="on"><svg><use href="#teams"/></svg><svg class="rec"><use href="#dot"/></svg></i><i class="on act"><svg><use href="#chrome"/></svg></i><i><svg><use href="#eclipse"/></svg></i><i><span class="my">MySQL</span></i><i><svg><use href="#wb"/></svg></i><i class="on"><svg><use href="#code"/></svg></i><i><svg><use href="#post"/></svg></i><i class="on"><svg><use href="#edge"/></svg></i><i class="on"><svg><use href="#note"/></svg></i></div>
    <div class="tray"><div class="hq"><svg><use href="#help"/></svg><b></b></div><svg class="up"><use href="#up"/></svg><svg class="bt"><use href="#batt"/></svg><svg class="vo"><use href="#vol"/></svg><div class="clock"><span>11:18</span><span>01/06/2021</span></div><div class="nb"><svg><use href="#notif"/></svg><b>1</b></div></div>
  </footer>
</section>

<section class="screen2">
  <div class="tabs"><div class="tab t1"><svg><use href="#outlook"/></svg><span>Mail - Jamil, Zayne - Outlook</span><svg class="x"><use href="#x"/></svg></div><div class="tab t2"><svg><use href="#jira"/></svg><span>QA Cinema Project - Agile board</span><svg class="x"><use href="#x"/></svg></div><div class="tab t3"><strong>QA</strong><span>QA Community</span><svg class="x"><use href="#x"/></svg></div><svg class="np"><use href="#plus"/></svg>
    <div class="cwc"><i><svg><use href="#trid"/></svg></i><svg><use href="#min"/></svg><svg><use href="#restore"/></svg><svg><use href="#x"/></svg></div></div>
  <div class="ctool"><div class="cnav"><svg><use href="#back"/></svg><svg class="dim"><use href="#fwd"/></svg><svg><use href="#reload"/></svg></div>
    <div class="curl"><svg><use href="#lock"/></svg><span><b>team-1616578727154.atlassian.net</b>/jira/software/projects/QAC/boards/6/backlog?atlOrigin=eyJpIjoiOWZmNTQ4Nzg4ODJlNDhkOGI1ZDFiYjk0ODQ...</span><svg class="st"><use href="#star"/></svg></div>
    <div class="cext"><svg class="h"><use href="#hand"/></svg><i class="se">Se</i><svg><use href="#atom"/></svg><svg class="pz"><use href="#puzzle"/></svg></div><div class="paused"><i>Z</i>Paused</div><svg class="kebab"><use href="#dots"/></svg></div>
  <div class="marks"><span class="m1"><svg><use href="#apps9"/></svg>Apps</span><span class="m2"><svg><use href="#globe"/></svg>Recent device strea...</span><span class="m3"><i></i>Work things</span><span class="m4"><i></i>Coding pages</span><span class="m5"><svg viewBox="0 0 14 14"><path d="M.7.7h12.600v12.600H.700zM3 4h1.500M6 4h5M3 7h1.500M6 7h5M3 10h1.500M6 10h5" fill="none" stroke="#eee" stroke-width="1.400"/></svg>Reading list</span></div>
  <div class="jira">
    <header class="jh"><svg class="grid"><use href="#grid"/></svg><svg class="logo"><use href="#jira"/></svg><span class="brand">Jira Software</span>
      <nav><a class="n1">Your work<svg><use href="#down"/></svg></a><a class="n2">Projects<svg><use href="#down"/></svg></a><a class="n3">Filters<svg><use href="#down"/></svg></a><a class="n4">Dashboards<svg><use href="#down"/></svg></a><a class="n5">People<svg><use href="#down"/></svg></a><a class="n6">Apps<svg><use href="#down"/></svg></a></nav>
      <span class="create">Create</span><div class="jsearch"><svg><use href="#mag"/></svg>Search</div>
      <div class="jico"><svg><use href="#bell"/></svg><svg class="q"><use href="#help"/></svg><svg><use href="#gear"/></svg></div><span class="av teal sm">ZJ</span></header>
    <div class="jbody">
      <aside class="jside"><div class="proj"><svg><use href="#wrench"/></svg><div><b>QA Cinema Project</b><small>Software project</small></div></div>
        <ul><li><svg><use href="#road"/></svg>Roadmap</li><li class="cur"><svg><use href="#blog"/></svg>Backlog</li><li><svg><use href="#board"/></svg>Board</li><li><svg><use href="#cd"/></svg>Code</li><li><svg><use href="#page"/></svg>Project pages</li><li><svg><use href="#add"/></svg>Add item</li><li class="last"><svg><use href="#gear"/></svg>Project settings</li></ul>
        <div class="foot"><span>You're in a team-managed project</span><a>Learn more</a></div></aside>
      <div class="jmain">
        <div class="crumbs"><span>Projects</span><span>/</span><span>QA Cinema Project</span></div><h1>Backlog</h1>
        <div class="filters"><div class="fbox"><svg><use href="#mag"/></svg></div><span class="av teal">ZJ</span><span class="av ap"><svg><use href="#addp"/></svg></span><span class="ef">Epic<svg><use href="#down"/></svg></span></div>
        <div class="work">
          <div class="epic"><div class="eh">Epic<svg><use href="#x"/></svg></div><div class="card c0">Issues without epic</div>
            <div class="card sn"><div class="snt"><svg class="rt"><use href="#down"/></svg><i></i>Site Navigation</div><div class="bar"></div><div class="remain">Remaining: 6</div></div>
            <div class="ce"><svg><use href="#plus"/></svg>Create Epic</div></div>
          <div class="listwrap"><div class="list">
            <div class="row"><svg><use href="#story"/></svg><em>QAC-11</em><p>As a user, I want there to be an opening times page, so that I can d...</p><b>SITE NAVIGATION</b><svg class="us"><use href="#user"/></svg></div>
            <div class="row"><svg><use href="#story"/></svg><em>QAC-12</em><p>As a user, I want to be able to see an image gallery of all new releases, so that I can see ...</p><svg class="us"><use href="#user"/></svg></div>
            <div class="row"><svg><use href="#story"/></svg><em>QAC-13</em><p>As a user, I want to be able to see a seating plan, so that I can decide where to sit prior t...</p><svg class="us"><use href="#user"/></svg></div>
            <div class="row"><svg><use href="#story"/></svg><em>QAC-14</em><p>As a user, I want to be able to book tickets on the website, so that I can reserve my seats...</p><svg class="us"><use href="#user"/></svg></div>
            <div class="row"><svg><use href="#story"/></svg><em>QAC-15</em><p>As a user, I want to be able to securely pay for tickets I have booked in advance, so that ...</p><svg class="us"><use href="#user"/></svg></div>
            <div class="row"><svg><use href="#story"/></svg><em>QAC-16</em><p>As a user who has never been to the cinema before, I want to be able to see detailed dir...</p><svg class="us"><use href="#user"/></svg></div>
            <div class="row"><svg><use href="#story"/></svg><em>QAC-17</em><p>As a user, I want there to be a discussion board, so that I can discuss my movies and my ...</p><svg class="us"><use href="#user"/></svg></div>
            <div class="row hot"><svg><use href="#story"/></svg><em>QAC-18</em><p>As a user/client, I want to be able to visit an about page, so that I can l...</p><b>SITE NAVIGATION</b><svg class="us"><use href="#user"/></svg></div>
            <div class="row"><svg><use href="#story"/></svg><em>QAC-19</em><p>As a client, I want there to be a Page Header &amp; Footer that contains lin...</p><b>SITE NAVIGATION</b><svg class="us"><use href="#user"/></svg></div>
            <div class="row"><svg><use href="#story"/></svg><em>QAC-20</em><p>As a client, I want there to be a high level overview of the Scrum process, so that I can e...</p><svg class="us"><use href="#user"/></svg></div>
            <div class="row"><svg><use href="#story"/></svg><em>QAC-21</em><p>As I client, I want a custom logo designed and placed on the Home page, so that users c...</p><svg class="us"><use href="#user"/></svg></div>
          </div></div>
          <div class="sb"><svg><use href="#tri"/></svg><i></i><svg><use href="#trid"/></svg></div>
        </div>
      </div>
    </div>
  </div>
  <footer class="task mini">
    <div class="ta"><svg><use href="#win"/></svg></div><div class="ta"><svg><use href="#search"/></svg></div><div class="ta"><svg class="co"><use href="#cortana"/></svg></div><div class="ta"><svg><use href="#task"/></svg></div>
    <div class="tb"><i class="on"><svg><use href="#git"/></svg></i><i class="on"><svg><use href="#folder"/></svg></i><i class="on"><svg><use href="#teams"/></svg><svg class="rec"><use href="#dot"/></svg></i><i class="on act"><svg><use href="#chrome"/></svg></i><i><svg><use href="#eclipse"/></svg></i><i><span class="my">MySQL</span></i><i><svg><use href="#wb"/></svg></i><i class="on"><svg><use href="#code"/></svg></i><i><svg><use href="#post"/></svg></i><i class="on"><svg><use href="#edge"/></svg></i><i class="on"><svg><use href="#note"/></svg></i></div>
    <div class="clock"><span>11:18</span><span>01/06/2021</span></div>
  </footer>
</section>
</main>
</body>
</html>
```
FILE: styles.css
```css
* { box-sizing: border-box; }
body { margin: 0; background: #000; width: 3280px; height: 1080px; overflow: hidden; font-family: "Open Sans", "Noto Sans", sans-serif; font-size: 14px; letter-spacing: -0.03em; white-space: nowrap; }
.defs { position: absolute; width: 0; height: 0; }
svg { flex: none; display: block; }
i, em { font-style: normal; }
p, h1, h2, h3, ul, dl, dd { margin: 0; padding: 0; }
.desk { display: flex; height: 1080px; }
.screen1 { width: 1920px; display: flex; flex-direction: column; background: #0a0a0a; }
.screen2 { width: 1360px; display: flex; flex-direction: column; background: #000; }

/* Meeting window */
.teams { height: 1030px; width: 1918px; padding-top: 2px; border-left: 1px solid #000; background: #1b1b1b; display: flex; flex-direction: column; }
.ttitle { height: 49px; background: #0a0a0a; border-bottom: 1px solid #000; display: flex; align-items: center; justify-content: flex-end; position: relative; color: #707070; }
.tt { flex: 1; text-align: center; font-size: 16.5px; padding: 3px 0 0 150px; }
.wc { display: flex; justify-content: flex-end; gap: 33px; padding: 0 16px 2px 0; width: 148px; color: #777; }
.wc svg { width: 16px; height: 16px; }
.tbar { height: 75px; background: #1f1f1f; display: flex; align-items: center; padding: 2px 25px 0 35px; color: #fff; }
.timer { flex: 1; font-size: 16px; color: #e4e4e4; letter-spacing: -0.01em; }
.req { width: 177px; height: 40px; border: 1px solid #6c6c6c; background: #2a2a2a; border-radius: 3px; display: flex; align-items: center; justify-content: center; font-weight: 600; font-size: 16.5px; margin-right: 74px; }
.tic { display: flex; align-items: center; gap: 34px; color: #e0e0e0; width: 240px; }
.tic svg { width: 26px; height: 26px; }
.tic.b { border-left: 1px solid #444; height: 40px; padding-left: 31px; gap: 35px; width: 211px; color: #fff; }
.leave { width: 131px; height: 40px; border-radius: 3px; background: #c4314b; display: flex; align-items: center; justify-content: center; gap: 8px; font-weight: 600; font-size: 17px; letter-spacing: -0.045em; }
.leave svg { width: 26px; height: 12px; }
.stage { height: 779px; margin: 4px 3px 0 4px; background: #000; display: flex; color: #fff; }
.speaker { width: 263px; align-self: flex-end; padding: 0 0 15px 17px; font-size: 15px; line-height: 20px; }
.share { width: 1384px; height: 779px; position: relative; display: flex; flex-direction: column; overflow: hidden; }
.mtask { height: 22px; background: linear-gradient(90deg,#102430,#102f3d 20%,#0a2f4a 35%,#03254f 42%,#033050 48%,#083a55 60%,#0b2b3f 80%,#1b2a3a); display: flex; }
.ma { display: flex; width: 105.5px; }
.ma svg { width: 26px; height: 22px; padding: 5px 7px; }
.mb { display: flex; flex: 1; }
.mb i { width: 26.7px; display: flex; justify-content: center; align-items: center; position: relative; }
.mb svg { width: 13px; height: 13px; }
.mb .act { background: #1d5c80; }
.mb .on::after { content: ""; position: absolute; left: 3px; right: 3px; top: 0; height: 1.5px; background: #8cc4e6; }
.mt { display: flex; align-items: center; gap: 4px; padding-right: 16px; font-size: 10px; color: #eee; --cut: #182b3a; }
.mt svg { width: 13px; height: 10px; }
.mt .hb { color: #25a5dd; } .mt .c1 { color: #0f78d4; } .mt .c2 { color: #d5dbe0; }
.mt span { margin: 0 5px 0 2px; }
.mt svg.nt { width: 14px; height: 12px; margin-left: 2px; }
.mtitle { height: 23px; background: #104768; display: flex; align-items: center; justify-content: center; gap: 5px; font-size: 10px; letter-spacing: -.05em; position: relative; padding-left: 7px; }
.mtitle > svg { width: 12px; height: 12px; }
.mwc { position: absolute; right: 12px; top: 6px; display: flex; gap: 25px; }
.mwc svg { width: 9px; height: 9px; }
.maddr { height: 27.5px; background: #3b3a3b; display: flex; align-items: center; }
.mnav { display: flex; width: 104px; padding-left: 13px; gap: 19px; color: #ddd; }
.mnav svg { width: 13px; height: 13px; } .mnav .dim { color: #777; }
.murl { width: 500px; flex: 1; height: 21px; background: #2a2a2a; border-radius: 2px; display: flex; align-items: center; padding: 0 7px 0 10px; color: #999; font-size: 10.5px; gap: 12px; }
.murl svg { width: 10px; height: 12px; color: #ddd; }
.murl .u { flex: 1; letter-spacing: -.042em; } .murl b { font-weight: 400; color: #fff; }
.murl svg.sa { width: 13px; height: 13px; color: #aaa; }
.mx { width: 180px; display: flex; align-items: center; padding-left: 14px; gap: 17px; color: #ddd; }
.mx svg { width: 13px; height: 13px; } .mx i { width: 1px; height: 11px; background: #666; margin: 0 -3px; }
.mx svg.pf { width: 17px; height: 17px; } .mx svg.dd { width: 10px; height: 3px; }
.mbody { display: flex; height: 706.5px; }
.mside { width: 35px; background: #3b3b3b; display: flex; flex-direction: column; align-items: center; color: #ddd; }
.mside hr { width: 22px; margin: 0; border: 0; border-top: 1px solid #5c5c5c; }
.mside svg { width: 12px; height: 13px; margin-top: 12.500px; } .mside hr + svg { margin-top: 11px; }
.mside .sel { width: 22px; height: 24px; border-radius: 3px; background: #555; margin: 7px 0 -4px; display: flex; justify-content: center; align-items: center; }
.mside .sel svg { margin: 0; } .mside svg + hr { margin-top: 9px; } .mside svg:nth-child(3), .mside svg:nth-child(4) { margin-top: 12px; } .mside svg.pl { width: 11px; height: 11px; margin-top: 9px; --w: 1.200; }
.tooltip { position: absolute; left: 599px; top: 645px; width: 173px; height: 57px; background: #172b4d; color: #fff; border-radius: 2px; padding: 1.500px 4px; font-size: 9px; line-height: 10.9px; letter-spacing: -.035em; }
.cursor { position: absolute; left: 793px; top: 629px; width: 12px; height: 16px; }

/* Participants */
.tiles { display: flex; margin-top: 3px; height: 118px; padding-left: 793px; }
.tile { width: 225px; background: #383838; --cut: #383838; display: flex; flex-direction: column; align-items: center; position: relative; color: #fff; }
.tile.talk { background: radial-gradient(circle at 50% 50%, #56548a 0, #45446c 30%, #353549 70%); }
.tile.lite { background: #3c3c3c; --cut: #3c3c3c; } .tile.me { width: 221px; background: #1f1f1f; padding-left: 4px; }
.pa { width: 55px; height: 55px; border-radius: 50%; margin-top: 32px; display: flex; align-items: center; justify-content: center; font-size: 20px; font-weight: 600; letter-spacing: -0.02em; }
.talk .pa { box-shadow: 0 0 0 7px #343450, 0 0 0 11.500px #9ea2ff; }
.nd { background: #e8dcd8; color: #5c4034; } .ps { background: #d5d2e8; color: #28235a; } .rl { background: #ccdbe8; color: #123258; } .uu { background: #f7e8cc; color: #835b00; } .zj { background: #c9d5e8; color: #0f2f68; }
.tile label { width: 100%; margin-top: 5px; padding-left: 18px; font-size: 15px; line-height: 22px; display: flex; align-items: center; gap: 12px; text-shadow: 0 1px 2px #000; position: relative; }
.tile label svg { width: 16px; height: 16px; }

/* Windows taskbars */
.task { display: flex; align-items: stretch; color: #000; background: linear-gradient(90deg,#f3e3e9,#ead5dc 18%,#ead3da 28%,#f1dcd4 48%,#f1ddd6 60%,#edd8d8 68%,#e6d3dc 73%,#cfe6ea 79%,#cceaee); }
.ta { display: flex; justify-content: center; align-items: center; width: 60px; }
.ta svg { width: 20px; height: 20px; }
.tsearch { width: 430px; background: #fff; border: 1px solid #ccc; display: flex; align-items: center; padding-left: 14px; gap: 14px; font-size: 18.5px; color: #333; }
.tsearch svg { width: 21px; height: 21px; }
.tb { display: flex; }
.tb i { display: flex; align-items: center; justify-content: center; position: relative; width: 62.150px; }
.tb svg { width: 29px; height: 29px; }
.tb .rec { position: absolute; width: 13px; height: 13px; left: 34px; top: 28px; }
.tb .on::after { content: ""; position: absolute; bottom: 0; left: 6px; width: 51px; height: 3px; background: #0078d7; }
.tb .act { background: linear-gradient(90deg, transparent 1px, #fff9 1px, #fff9 57px, #cbb 57px, #fff6 58px, #fff6 61px, transparent 61px); }
.tb .act::after { left: 1px; width: 60px; }
.my { width: 29px; height: 24px; background: #000; border: 1px solid #16385f; border-top: 4px solid #1177d8; color: #ddd; font: 8px/13px "Liberation Mono", monospace; text-align: center; letter-spacing: 0; }
.mini .my { width: 24px; height: 20px; font-size: 7px; line-height: 10px; border-top-width: 3px; }
.big { height: 50px; } .big .tb { margin-left: 2px; flex: 1; }
.big .co, .mini .co { width: 22px; height: 22px; }
.tray { display: flex; align-items: center; }
.hq { color: #0f9bd8; width: 25px; height: 25px; margin-right: 12px; position: relative; border-radius: 50%; box-shadow: 0 0 0 1px #fff; } .hq svg { width: 25px; height: 25px; } .hq b { position: absolute; right: -3px; bottom: -1px; width: 11px; height: 11px; border-radius: 50%; background: #f5a81c; }
.tray .up { width: 16px; height: 10px; margin-right: 11px; } .tray .bt { width: 22px; height: 14px; margin-right: 8px; } .tray .vo { width: 22px; height: 16px; margin-right: 10px; }
.clock { display: flex; flex-direction: column; align-items: center; justify-content: center; font-size: 14px; line-height: 23px; width: 80px; }
.nb { width: 72px; padding-left: 20px; position: relative; } .nb > svg { width: 20px; height: 20px; }
.nb b { position: absolute; left: 29px; top: 8px; width: 20px; height: 20px; border-radius: 50%; border: 1px solid #777; background: #dde3e4; font-weight: 400; font-size: 13px; text-align: center; line-height: 18px; }
.mini { height: 40px; } .mini .ta { width: 48px; } .mini .ta svg { width: 16px; height: 16px; } .mini .tb { margin-left: 2.500px; flex: 1; } .mini .tb i { width: 49px; }
.mini .tb svg { width: 24px; height: 24px; } .mini .tb svg.rec { width: 11px; height: 11px; left: 26px; top: 22px; }
.mini .tb .on::after { left: 4px; width: 40px; height: 2px; } .mini .tb .act::after { left: 0; width: 48px; }
.mini .tb .act { background: linear-gradient(90deg,#fff9 45px,#cbb 45px,#fff6 46px,#fff6 48px,transparent 48px); }
.mini .clock { font-size: 12px; line-height: 18.500px; width: 70px; padding-bottom: 1px; letter-spacing: -.065em; }

/* Chrome */
.tabs { height: 34px; display: flex; align-items: center; color: #eee; font-size: 12.3px; background: #000; }
.tab { display: flex; align-items: center; height: 34px; }
.tab > svg { width: 16px; height: 16px; } .tab span { margin-left: 8px; flex: 1; } .tab svg.x { width: 9px; height: 9px; --w: 2.500; }
.t1 { width: 247px; padding: 0 15px 0 20px; } .t2 { width: 240px; border-radius: 8px 8px 0 0; background: #353535; padding: 0 12px; } .t2 span { -webkit-mask: linear-gradient(90deg,#000 88%,#0004); margin-right: 10px; } .t3 { width: 239px; padding: 0 11px 0 18px; border-right: 1px solid #444; height: 20px; }
.t3 span { letter-spacing: -.02em; }
.t3 strong { color: #0d3b48; width: 16px; margin-left: -8px; font-size: 12px; } .t3 strong + span { margin-left: 8px; } .np { width: 13px; height: 13px; margin-left: 16px; --w: 2; }
.cwc { margin-left: auto; padding: 0 17px 5px 0; display: flex; align-items: center; gap: 34px; } .cwc svg { width: 12px; height: 12px; } .cwc i { width: 15px; height: 15px; border-radius: 50%; background: #fff; color: #000; display: flex; align-items: center; justify-content: center; margin: 5px -4px 0 0; } .cwc i svg { width: 7px; height: 5px; }
.ctool { height: 36px; background: #353535; display: flex; align-items: center; color: #fff; }
.cnav { display: flex; width: 108px; padding-left: 14px; gap: 18.500px; } .cnav svg { width: 14px; height: 15px; } .cnav .dim { color: #888; }
.curl { width: 994px; height: 28px; border-radius: 14px; background: #202124; display: flex; align-items: center; padding: 0 10px 0 13px; color: #9aa0a6; font-size: 14px; letter-spacing: -.019em; }
.curl > svg { width: 9px; height: 12px; } .curl span { flex: 1; margin-left: 12px; } .curl b { color: #fff; font-weight: 400; } .curl svg.st { width: 15px; height: 15px; color: #ccc; }
.cext { display: flex; gap: 16px; align-items: center; margin-left: 15px; } .cext svg { width: 16px; height: 16px; } .se { width: 16px; height: 16px; background: #555; color: #888; font-size: 10px; font-weight: 700; text-align: center; line-height: 20px; }
.paused { margin-left: 10px; width: 81px; height: 28px; border: 1px solid #8ab4f8; border-radius: 14px; display: flex; align-items: center; gap: 8px; color: #8ab4f8; font-size: 12.5px; background: #2b303b; padding-left: 2px; letter-spacing: -.06em; } .paused i { width: 22px; height: 22px; border-radius: 50%; background: #00897b; color: #fff; font-size: 10px; display: flex; align-items: center; justify-content: center; }
.kebab { width: 14px; height: 4px; margin-left: 11px; transform: rotate(90deg); }
.marks { height: 33px; background: #353535; border-bottom: 1px solid #222; display: flex; color: #eee; font-size: 12.2px; }
.marks span { display: flex; align-items: center; padding-bottom: 3px; gap: 9px; } .marks svg { width: 14px; height: 14px; } .marks i { width: 12px; height: 14px; background: #ffe28a; border-radius: 1px; }
.m1 { padding-left: 14px; width: 82px; } .m2 { width: 152px; } .m3 { width: 105px; } .marks .m5 { margin-left: auto; margin-right: 14px; position: relative; } .m5::before { content: ""; width: 1px; height: 16px; background: #666; margin-right: 2px; }

/* Jira */
.jira { background: #fff; color: #172b4d; display: flex; flex-direction: column; flex: 1; min-width: 0; min-height: 0; font-size: 14px; overflow: hidden; }
.screen2 .jira { flex: none; height: 625px; }
.small { zoom: 0.7205; height: 980.5px; }
.jh { height: 57px; border-bottom: 1px solid #dfe1e6; box-shadow: 0 1px 2px #0001; display: flex; align-items: center; padding-left: 21px; flex: none; color: #344563; position: relative; }
.grid { width: 17px; height: 17px; } .logo { width: 17px; height: 18px; margin: 0 5px 0 14px; } .brand { font-family: Lato, sans-serif; font-size: 19.5px; width: 143px; color: #253858; letter-spacing: 0; }
nav { display: flex; align-self: stretch; font-weight: 500; } nav a { display: flex; align-items: center; gap: 3px; } nav svg { width: 11px; height: 8px; opacity: .55; }
.n1 { width: 95px; } .n2 { width: 82px; color: #0052cc; position: relative; } .n2::after { content: ""; position: absolute; left: -2px; width: 66px; bottom: 0; height: 3px; background: #0052cc; } .n3 { width: 71px; } .n4 { width: 107px; } .n5 { width: 75px; } .n6 { width: 71px; }
.create { width: 65px; height: 32px; background: #0052cc; color: #fff; border-radius: 3px; display: flex; align-items: center; justify-content: center; font-weight: 600; }
.jsearch { margin-left: auto; width: 200px; height: 32px; border: 2px solid #dfe1e6; border-radius: 5px; display: flex; align-items: center; gap: 9px; padding: 0 0 1px 8px; color: #5e6c84; font-family: "Liberation Sans", sans-serif; letter-spacing: 0; } .jsearch svg { width: 13px; height: 13px; }
.jico { display: flex; align-items: center; padding-left: 14px; width: 132px; gap: 21px; } .jico svg { width: 18px; height: 19px; } .jico .q { width: 20px; height: 20px; } 
.av { width: 32px; height: 32px; border-radius: 50%; display: flex; align-items: center; justify-content: center; font-weight: 600; flex: none; font-size: 13px; } .av.sm { width: 24px; height: 24px; font-size: 10px; margin-right: 24px; } .lr { background: #5243aa; color: #fff; } .teal { background: #00a3bf; color: #172b4d; } .ap { background: #dfe1e6; color: #7a869a; } .ap svg { width: 18px; height: 18px; }
.jbody { display: flex; flex: 1; min-height: 0; }
.jside { width: 241px; background: #fafbfc; border-right: 1px solid #e3e5ea; padding: 37px 9px 0 8px; display: flex; flex-direction: column; color: #42526e; flex: none; }
.proj { display: flex; gap: 16px; padding-left: 10px; height: 42px; } .proj svg { width: 24px; height: 24px; margin-top: -1px; } .proj div { display: flex; flex-direction: column; margin-top: -7px; } .proj b { font-weight: 600; line-height: 20px; } .proj small { font-size: 12px; line-height: 17px; color: #6b778c; }
.jside ul { list-style: none; margin-top: 8px; } .jside li { height: 40px; display: flex; align-items: center; gap: 18px; padding-left: 12px; border-radius: 3px; } .jside li svg { width: 20px; height: 18px; } .jside li.cur { background: #ebecf0; color: #0052cc; } .jside li.last { margin-top: 2px; }
.foot { margin-top: auto; display: flex; flex-direction: column; align-items: center; font-size: 12.2px; padding-bottom: 19px; line-height: 27px; color: #42526e; } .foot a { color: #6b778c; font-weight: 500; }
.jmain { flex: 1; min-width: 0; padding-left: 31px; display: flex; flex-direction: column; }
.crumbs { display: flex; gap: 10.5px; color: #6b778c; line-height: 20px; margin-top: 25px; } h1 { font-size: 24px; font-weight: 600; line-height: 28px; margin-top: 6px; letter-spacing: -.04em; }
.filters { display: flex; align-items: center; margin-top: 16px; height: 40px; } .fbox { width: 120px; height: 40px; border: 2px solid #dfe1e6; border-radius: 3px; background: #fafbfc; display: flex; align-items: center; justify-content: flex-end; padding-right: 10px; margin-right: 16px; color: #6b778c; } .fbox svg { width: 13px; height: 13px; } .ap { margin-left: 10px; } .ef { margin-left: 24px; display: flex; align-items: center; gap: 11px; color: #42526e; font-weight: 500; } .ef svg { width: 10px; height: 8px; }
.work { display: flex; flex: 1; min-height: 0; margin-top: 16px; }
.epic { width: 270px; flex: none; margin: 8px 20px 16px 0; background: #f4f5f7; border-radius: 6px; padding: 0 4px; color: #42526e; font-weight: 500; }
.eh { height: 42px; display: flex; align-items: center; justify-content: space-between; padding: 0 14px 2px 12px; } .eh svg { width: 10px; height: 10px; --w: 2.500; }
.card { background: #fff; border-radius: 4px; box-shadow: 0 1px 1px #091e4240, 0 0 1px #091e424f; padding-left: 12px; color: #5e6c84; } .c0 { height: 42px; display: flex; align-items: center; padding-top: 3px; } .sn { margin-top: 4px; height: 54px; background: #f4f5f7; position: relative; padding-top: 13px; } .sn.open { background: #fff; height: 210px; }
.snt { display: flex; align-items: center; height: 18px; letter-spacing: -.02em; } .snt svg { width: 10px; height: 9px; } .snt .rt { transform: rotate(-90deg); } .snt i { width: 16px; height: 16px; border-radius: 3px; background: #8777d9; margin: 0 8px 0 6px; } .bar { height: 4px; background: #ebecf0; border-radius: 2px; margin: 7px 14px 0 2px; }
.remain { position: absolute; left: 91px; top: 50px; width: 80px; height: 19px; background: #172b4d; color: #fff; border-radius: 3px; text-align: center; font-size: 12px; line-height: 19px; font-weight: 400; z-index: 2; }
.sn dl { font-size: 12px; font-weight: 400; margin-top: 21px; } .sn dt { line-height: 18px; font-weight: 500; color: #42526e; } .sn dd { font-size: 13px; line-height: 17px; margin-bottom: 17px; color: #6b778c; } .vad { height: 31px; background: #f4f5f7; border-radius: 3px; margin: -6px 12px 0 0; display: flex; align-items: center; justify-content: center; color: #344563; font-weight: 500; }
.ce { margin-top: 6px; height: 36px; border-radius: 3px; background: #ebecf0; display: flex; align-items: center; justify-content: center; gap: 6px; } .ce svg { width: 12px; height: 12px; }
.listwrap { flex: 1; min-width: 0; overflow: hidden; padding-right: 41px; } .list { border: solid #ebecf0; border-width: 0 1px 1px; margin-top: -27.500px; } .small .list { margin-top: -12px; }
.row { height: 40px; border-bottom: 1px solid #ebecf0; display: flex; align-items: center; padding: 0 53px 0 16px; } .small .row { height: 40.07px; } .row > svg { width: 14px; height: 14px; } .row em { color: #6b778c; margin: 0 8px 0 9px; } .row p { flex: 1; min-width: 0; letter-spacing: -.0205em; } .row b { height: 21px; line-height: 21px; width: 101px; margin-left: 8px; text-align: center; border-radius: 3px; background: #eae6ff; color: #403294; font-size: 11px; font-weight: 700; } .row svg.us { width: 24px; height: 24px; margin-left: 10px; } .row.hot { background: #deebff; }
.est { width: 16px; height: 16px; border-radius: 8px; background: #dfe1e6; margin: 0 -2px 0 12px; text-align: center; line-height: 14px; flex: none; } .more { width: 32px; height: 32px; background: #ccdcf6; border-radius: 3px; margin: 0 -43px 0 11px; display: flex; align-items: center; justify-content: center; color: #42526e; flex: none; } .more svg { width: 14px; height: 4px; }
.ci { display: flex; align-items: center; gap: 7px; color: #42526e; font-weight: 500; padding: 9px 0 0 14px; } .ci svg { width: 10px; height: 10px; }
.sb { width: 17px; flex: none; background: #f1f1f1; display: flex; flex-direction: column; align-items: center; padding: 6px 0; color: #505050; } .sb svg { width: 8px; height: 5px; } .sb svg.g { color: #a3a3a3; } .sb i { width: 14px; background: #c1c1c1; height: 181px; margin: 164px 0 auto; } .small .sb i { height: 647px; margin-top: 97px; } .small .two i { height: 563px; margin-top: 5px; } .sb svg:first-child { margin-top: 1px; }
.detail { width: 423px; padding-left: 30px; flex: none; display: flex; flex-direction: column; }
.dh { height: 58px; display: flex; justify-content: space-between; } .dc { font-size: 12.500px; color: #6b778c; padding-top: 2px; } .dc span { display: flex; align-items: center; gap: 4px; height: 20.500px; } .dc svg { width: 14px; height: 14px; } .da { display: flex; align-items: center; height: 44px; color: #42526e; padding-right: 10px; gap: 17px; } .da svg { width: 16px; height: 16px; } .da svg.a1 { width: 14px; height: 18px; margin-right: 5px; } .da svg.a2 { width: 20px; margin-right: -8px; } .da svg.a3 { margin-left: 3px; } .da svg.a5 { height: 4px; } .da svg.a6 { width: 14px; } .da span { font-size: 12px; }
h2 { font-size: 24px; font-weight: 600; line-height: 28px; height: 168px; letter-spacing: -.028em; } .dbt { display: flex; gap: 8px; margin-top: 11px; color: #42526e; } .dbt i { width: 32px; height: 32px; border-radius: 3px; background: #f4f5f7; display: flex; align-items: center; justify-content: center; } .dbt svg { width: 18px; height: 18px; } .dbt svg.dd { width: 15px; height: 4px; margin: 0; }
.todo { margin-top: 20px; width: 89px; height: 32px; background: #dfe1e6; border-radius: 3px; display: flex; align-items: center; padding-left: 12px; gap: 10px; font-weight: 600; color: #42526e; } .todo svg { width: 10px; height: 8px; } h3 { font-size: 14px; font-weight: 600; line-height: 20px; margin-top: 27px; color: #344563; } .ad { line-height: 20px; margin-top: 7px; color: #6b778c; letter-spacing: -.015em; }
.pinned { height: 79px; margin: 22px 8px 0 -13px; background: #eae6ff; border-radius: 3px; padding: 11px 18px 0 13px; color: #403294; } .pinned div { display: flex; justify-content: space-between; align-items: center; font-size: 11.500px; line-height: 18px; } .pinned div svg { width: 10px; height: 10px; --w: 3; } .pinned p { display: flex; align-items: center; gap: 5px; margin-top: 14px; line-height: 20px; letter-spacing: -.015em; } .pinned p svg { width: 14px; height: 14px; }
.fields { height: 177px; overflow: hidden; border-bottom: 2px solid #ebecf0; margin-right: 20px; padding-top: 6px; } .fields div { display: flex; align-items: center; height: 48px; } .fields b { width: 124px; font-weight: 500; font-size: 13px; color: #42526e; } .fields span { color: #6b778c; } .fields .un { display: flex; align-items: center; gap: 8px; color: #344563; } .un svg { width: 24px; height: 24px; }
.comment { display: flex; align-items: center; gap: 14px; margin: 15px 20px 0 1px; } .cbox { flex: 1; height: 40px; border: 1px solid #dfe1e6; border-radius: 3px; line-height: 38px; padding-left: 20px; color: #7a869a; } .tip { margin: 8px 0 0 47px; font-size: 12px; color: #6b778c; line-height: 20px; } .tip b { font-weight: 600; } kbd { font: inherit; font-weight: 700; background: #dfe1e6; border-radius: 3px; padding: 1px 4px; }
```
